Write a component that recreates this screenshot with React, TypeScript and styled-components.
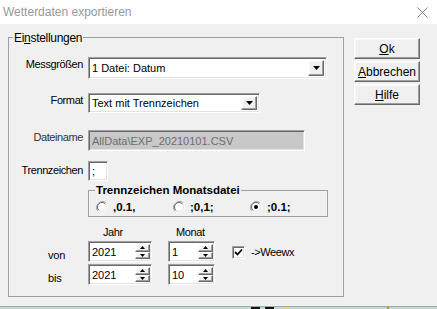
import { createGlobalStyle, css, styled } from "styled-components";

const GlobalStyle = createGlobalStyle`
  html, body {
    margin: 0;
    padding: 0;
  }

  body {
    background: #c2d8d0;
    font-family: "Liberation Sans", Arial, sans-serif;
    color: #000;
  }
`;

const sunken = css`
  box-sizing: border-box;
  border-style: solid;
  border-width: 1px;
  border-color: #a0a0a0 #ffffff #ffffff #a0a0a0;
  box-shadow: inset 1px 1px 0 #696969, inset -1px -1px 0 #e3e3e3;
`;

const raised = css`
  box-sizing: border-box;
  border-style: solid;
  border-width: 1px;
  border-color: #ffffff #696969 #696969 #ffffff;
  box-shadow: inset -1px -1px 0 #a0a0a0, inset 1px 1px 0 #f8f8f8;
  background: #f0f0f0;
`;

const Dialog = styled.div`
  width: 437px;
  height: 306px;
  background: #f0f0f0;

  display: flex;
  flex-direction: column;
`;

const TitleBar = styled.div`
  height: 24px;
  flex: none;
  box-sizing: border-box;
  padding: 0 9px 0 3px;

  display: flex;
  align-items: center;
  justify-content: space-between;

  background: #ffffff;
  color: #999999;
  font-size: 12px;
`;

const Body = styled.div`
  display: flex;
  gap: 10px;
  padding: 13px 0 0 8px;
`;

const Group = styled.div`
  width: 336px;
  height: 260px;
  box-sizing: border-box;
  border: 1px solid #a0a0a0;

  display: flex;
  flex-direction: column;
`;

const Caption = styled.span<{ $top: number; $left: number; $bold?: boolean }>`
  align-self: flex-start;
  margin: ${({ $top }) => -$top}px 0 0 ${({ $left }) => $left}px;
  padding: 0 1px;

  background: #f0f0f0;
  line-height: 14px;
  white-space: nowrap;
  font-size: ${({ $bold }) => ($bold ? "11.5px" : "12px")};
  font-weight: ${({ $bold }) => ($bold ? "bold" : "normal")};
  letter-spacing: ${({ $bold }) => ($bold ? "0" : "-0.3px")};
`;

const Row = styled.div<{ $gap: number }>`
  margin-top: ${({ $gap }) => $gap}px;

  display: grid;
  grid-template-columns: 74px 1fr;
  column-gap: 5px;
  align-items: start;
`;

const FieldLabel = styled.span<{ $offset?: number; $muted?: boolean }>`
  padding-top: ${({ $offset }) => $offset ?? 0}px;

  text-align: right;
  white-space: nowrap;
  font-size: 11px;
  line-height: 14px;
  letter-spacing: -0.4px;
  color: ${({ $muted }) => ($muted ? "#333333" : "#000")};
`;

const Combo = styled.div<{ $w: number; $h: number }>`
  ${sunken};
  width: ${({ $w }) => $w}px;
  height: ${({ $h }) => $h}px;
  padding: 2px 2px 2px 3px;

  display: flex;
  align-items: center;

  background: #ffffff;
  font-size: 11px;
  white-space: nowrap;
`;

const DropButton = styled.span`
  ${raised};
  width: 16px;
  height: 100%;
  margin-left: auto;

  display: flex;
  align-items: center;
  justify-content: center;
`;

const TextBox = styled.div<{ $w: number; $h: number; $disabled?: boolean }>`
  ${sunken};
  width: ${({ $w }) => $w}px;
  height: ${({ $h }) => $h}px;
  padding: 0 3px;

  display: flex;
  align-items: center;

  background: ${({ $disabled }) => ($disabled ? "#c8c8c8" : "#ffffff")};
  color: ${({ $disabled }) => ($disabled ? "#6d6d6d" : "#000")};
  font-size: 11px;
  white-space: nowrap;
`;

const RadioGroup = styled.div`
  width: 240px;
  height: 27px;
  box-sizing: border-box;
  border: 1px solid #a0a0a0;

  display: flex;
  flex-direction: column;
`;

const RadioRow = styled.div`
  margin-top: 4px;
  padding-left: 7px;

  display: grid;
  grid-template-columns: 77px 77px 1fr;
`;

const RadioItem = styled.label`
  display: flex;
  align-items: center;
  gap: 5px;

  font-size: 11.5px;
  font-weight: bold;
  line-height: 12px;
`;

const SpinGrid = styled.div`
  margin-top: 8px;

  display: grid;
  grid-template-columns: 79px 80px 64px 1fr;
  grid-template-rows: 14px 21px 21px;
  row-gap: 2px;
`;

const HeadLabel = styled.span<{ $indent: number }>`
  padding-left: ${({ $indent }) => $indent}px;

  font-size: 11px;
  line-height: 14px;
  letter-spacing: -0.4px;
  white-space: nowrap;
`;

const RowLabel = styled.span`
  padding: 7px 0 0 39px;

  font-size: 11px;
  line-height: 14px;
  letter-spacing: -0.2px;
`;

const Spin = styled.div<{ $w: number }>`
  ${sunken};
  width: ${({ $w }) => $w}px;
  height: 21px;
  padding: 2px 1px 2px 3px;

  display: flex;
  align-items: center;

  background: #ffffff;
  font-size: 11px;
`;

const SpinButtons = styled.span`
  width: 15px;
  height: 100%;
  margin-left: auto;

  display: flex;
  flex-direction: column;
`;

const SpinButton = styled.span`
  ${raised};
  flex: 1;

  display: flex;
  align-items: center;
  justify-content: center;
`;

const CheckCell = styled.label`
  padding-top: 5px;

  display: flex;
  align-items: flex-start;
  gap: 6px;

  font-size: 11px;
  line-height: 13px;
  letter-spacing: -0.4px;
  white-space: nowrap;
`;

const CheckBox = styled.span`
  ${sunken};
  width: 13px;
  height: 13px;

  display: flex;
  align-items: center;
  justify-content: center;

  background: #ffffff;
`;

const ButtonColumn = styled.div`
  margin-top: 1px;

  display: flex;
  flex-direction: column;
  gap: 2px;
`;

const Button = styled.button`
  ${raised};
  width: 66px;
  height: 21px;
  padding: 0;

  font-family: "Liberation Sans", Arial, sans-serif;
  font-size: 12px;
  color: #000;
`;

const Strip = styled.div`
  height: 3px;
  box-sizing: border-box;
  border-top: 1px solid #98aea6;

  display: flex;
  align-items: flex-start;
`;

const StripMark = styled.span<{ $left: number; $w: number; $color: string }>`
  width: ${({ $w }) => $w}px;
  height: 2px;
  margin-left: ${({ $left }) => $left}px;

  background: ${({ $color }) => $color};
`;

function Arrow({ up = false, size = 7 }: { up?: boolean; size?: number }) {
  const h = Math.ceil(size / 2);
  return (
    <svg width={size} height={h} viewBox={`0 0 ${size} ${h}`}>
      <polygon
        points={up ? `0,${h} ${size},${h} ${size / 2},0` : `0,0 ${size},0 ${size / 2},${h}`}
        fill="#000"
      />
    </svg>
  );
}

function Radio({ checked = false }: { checked?: boolean }) {
  return (
    <svg width="12" height="12" viewBox="0 0 12 12">
      <path d="M10.2 1.8 A6 6 0 0 0 1.8 10.2" fill="none" stroke="#a0a0a0" />
      <path d="M1.8 10.2 A6 6 0 0 0 10.2 1.8" fill="none" stroke="#ffffff" />
      <circle cx="6" cy="6" r="4.5" fill="#ffffff" stroke="#e3e3e3" />
      <path d="M9.2 2.8 A4.5 4.5 0 0 0 2.8 9.2" fill="none" stroke="#696969" />
      {checked && <circle cx="6" cy="6" r="2" fill="#000" />}
    </svg>
  );
}

function SpinBox({ value, width }: { value: string; width: number }) {
  return (
    <Spin $w={width}>
      {value}
      <SpinButtons>
        <SpinButton>
          <Arrow up size={5} />
        </SpinButton>
        <SpinButton>
          <Arrow size={5} />
        </SpinButton>
      </SpinButtons>
    </Spin>
  );
}

export default function App() {
  return (
    <>
      <GlobalStyle />
      <Dialog>
        <TitleBar>
          Wetterdaten exportieren
          <svg width="11" height="11" viewBox="0 0 11 11">
            <path d="M0.5 0.5 L10.5 10.5 M10.5 0.5 L0.5 10.5" stroke="#8a8a8a" strokeWidth="1" />
          </svg>
        </TitleBar>

        <Body>
          <Group>
            <Caption $top={7} $left={4}>
              Ei<u>n</u>stellungen
            </Caption>

            <Row $gap={12}>
              <FieldLabel>Messgrößen</FieldLabel>
              <Combo $w={239} $h={22}>
                1 Datei: Datum
                <DropButton>
                  <Arrow />
                </DropButton>
              </Combo>
            </Row>

            <Row $gap={14}>
              <FieldLabel>Format</FieldLabel>
              <Combo $w={172} $h={20}>
                Text mit Trennzeichen
                <DropButton>
                  <Arrow />
                </DropButton>
              </Combo>
            </Row>

            <Row $gap={17}>
              <FieldLabel $muted>Dateiname</FieldLabel>
              <TextBox $w={217} $h={21} $disabled>
                AllData\EXP_20210101.CSV
              </TextBox>
            </Row>

            <Row $gap={10}>
              <FieldLabel $offset={2}>Trennzeichen</FieldLabel>
              <TextBox $w={20} $h={20}>
                ;
              </TextBox>
            </Row>

            <Row $gap={9}>
              <span />
              <RadioGroup>
                <Caption $top={8} $left={6} $bold>
                  Trennzeichen Monatsdatei
                </Caption>
                <RadioRow>
                  <RadioItem>
                    <Radio />
                    ,0.1,
                  </RadioItem>
                  <RadioItem>
                    <Radio />
                    ;0,1;
                  </RadioItem>
                  <RadioItem>
                    <Radio checked />
                    ;0.1;
                  </RadioItem>
                </RadioRow>
              </RadioGroup>
            </Row>

            <SpinGrid>
              <span />
              <HeadLabel $indent={15}>Jahr</HeadLabel>
              <HeadLabel $indent={8}>Monat</HeadLabel>
              <span />

              <RowLabel>von</RowLabel>
              <SpinBox value="2021" width={64} />
              <SpinBox value="1" width={47} />
              <CheckCell>
                <CheckBox>
                  <svg width="9" height="9" viewBox="0 0 9 9">
                    <path d="M1 4 L3.5 6.5 L8 1.5" fill="none" stroke="#000" strokeWidth="1.8" />
                  </svg>
                </CheckBox>
                -&gt;Weewx
              </CheckCell>

              <RowLabel>bis</RowLabel>
              <SpinBox value="2021" width={64} />
              <SpinBox value="10" width={47} />
              <span />
            </SpinGrid>
          </Group>

          <ButtonColumn>
            <Button>
              <u>O</u>k
            </Button>
            <Button>
              <u>A</u>bbrechen
            </Button>
            <Button>
              <u>H</u>ilfe
            </Button>
          </ButtonColumn>
        </Body>
      </Dialog>
      <Strip>
        <StripMark $left={251} $w={9} $color="#111" />
        <StripMark $left={5} $w={9} $color="#111" />
        <StripMark $left={8} $w={7} $color="#e8d878" />
        <StripMark $left={98} $w={2} $color="#b8a000" />
      </Strip>
    </>
  );
}
